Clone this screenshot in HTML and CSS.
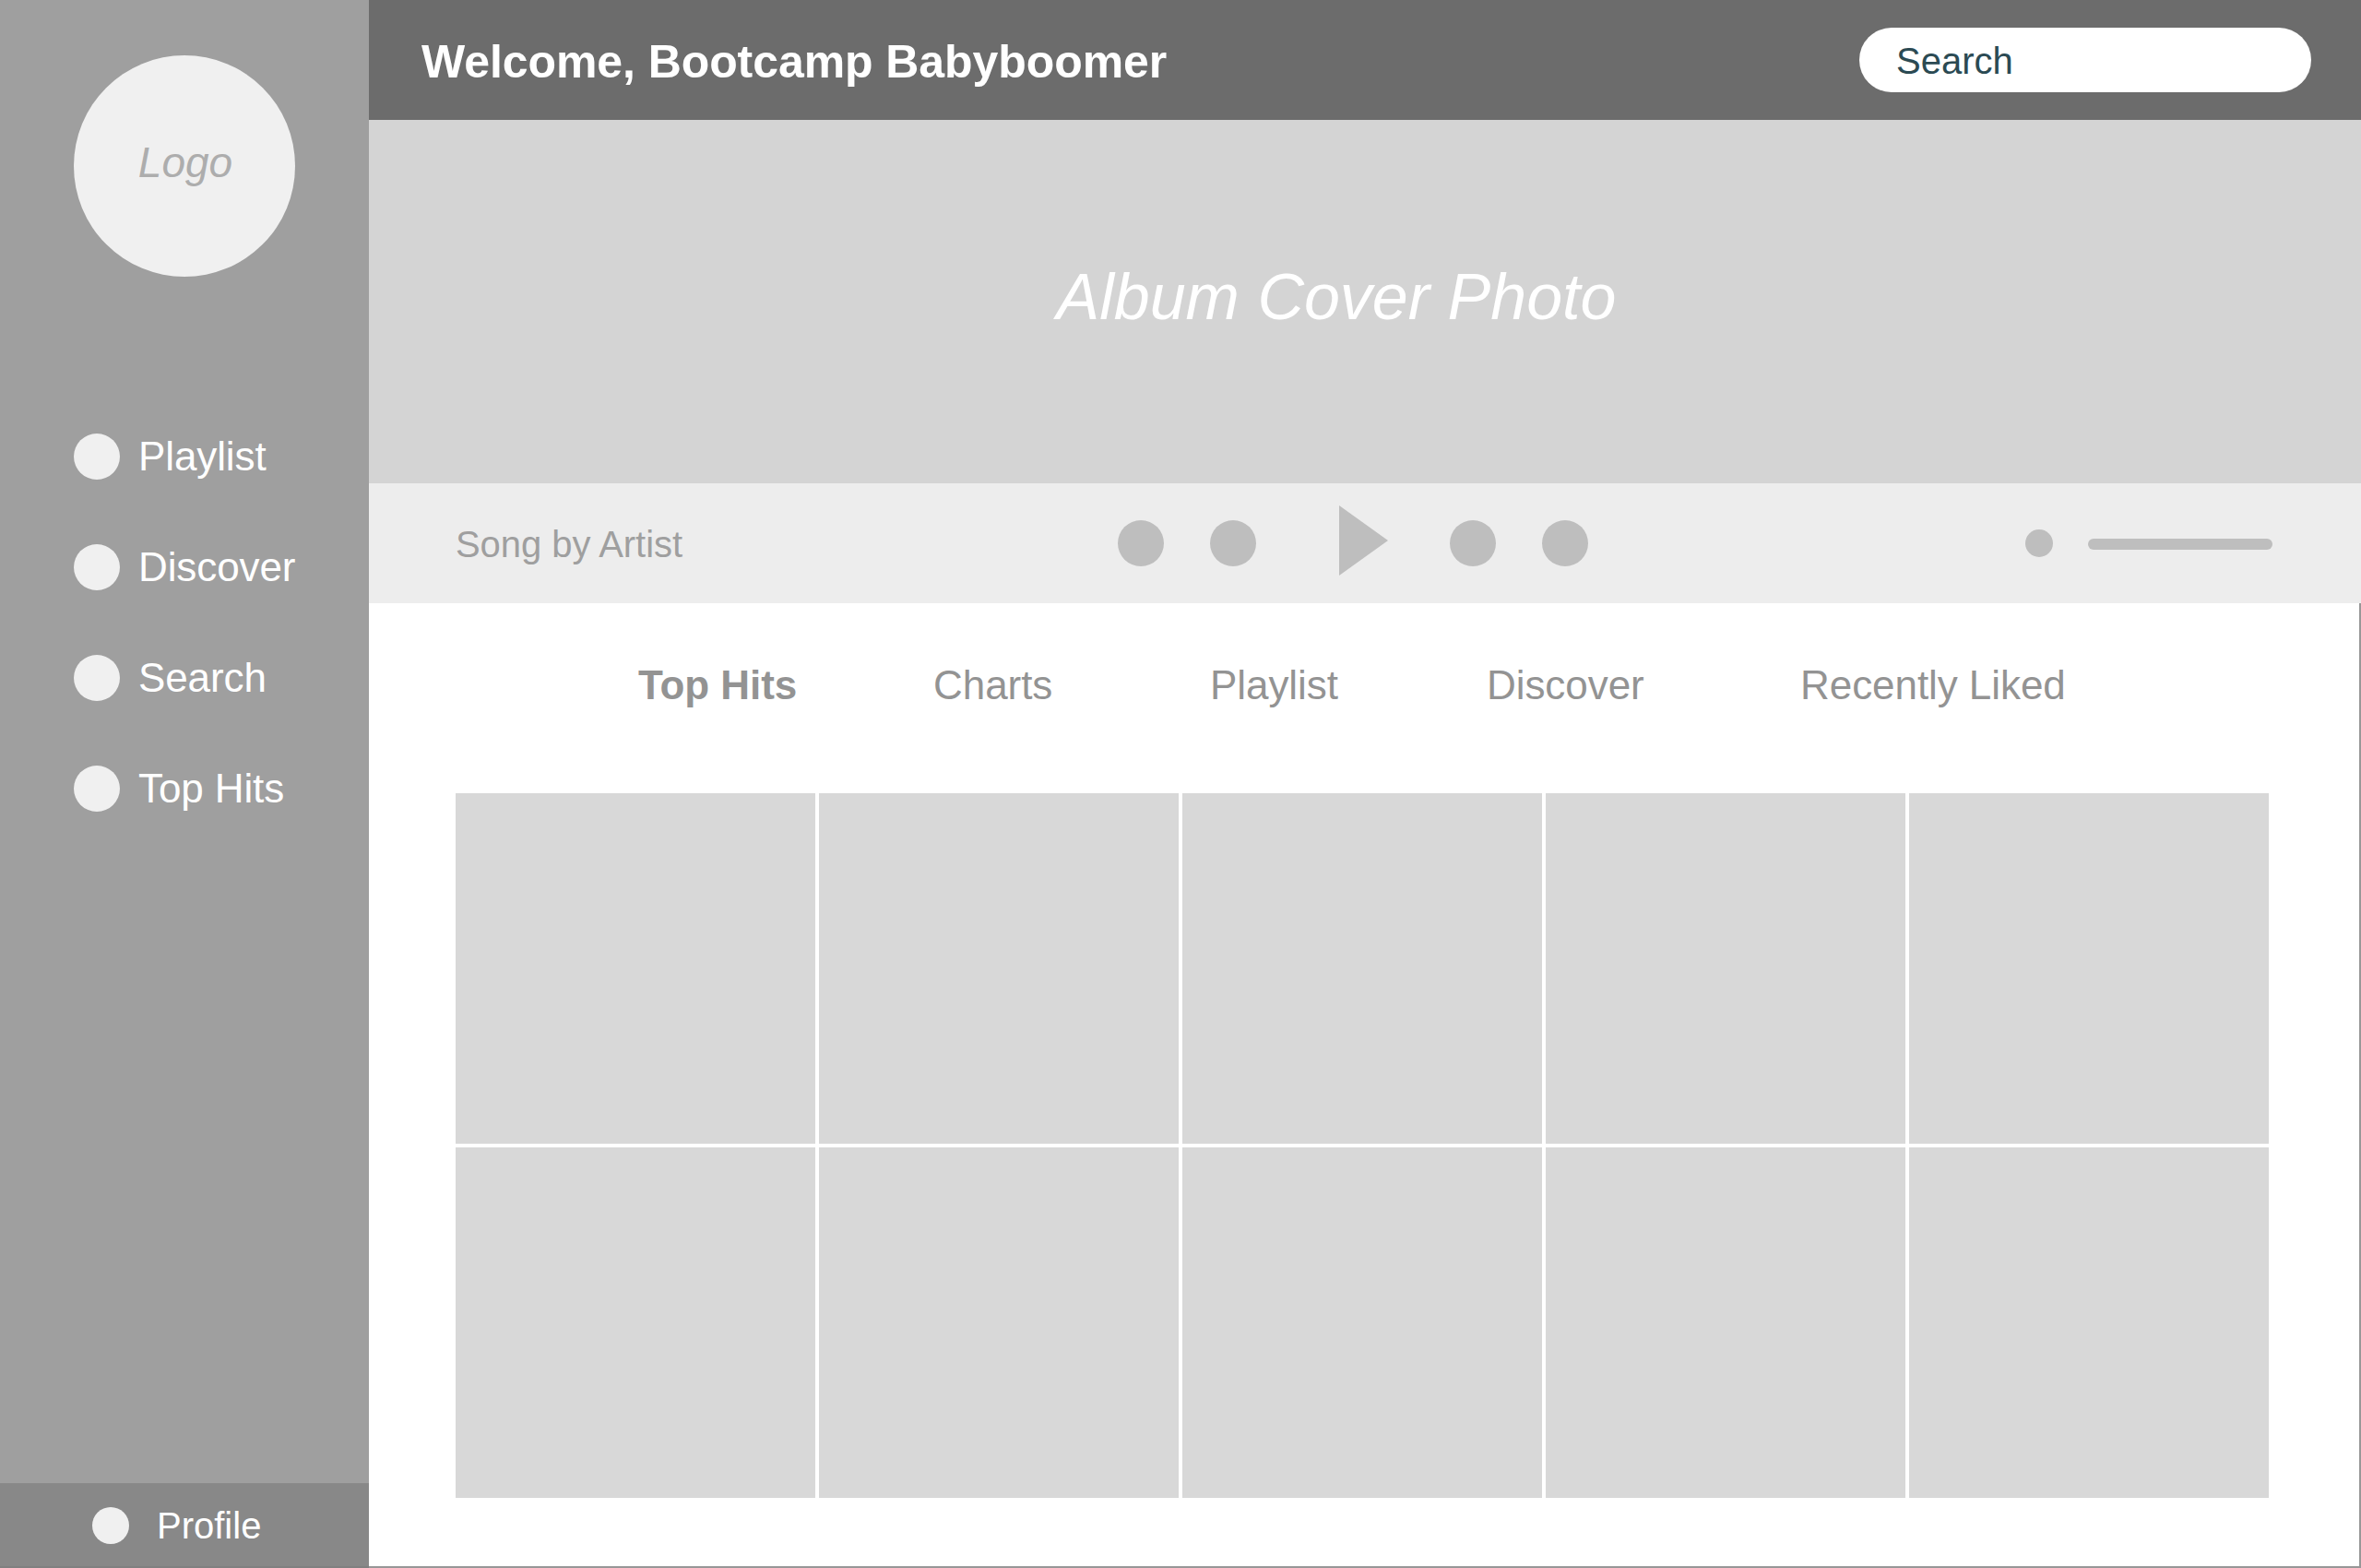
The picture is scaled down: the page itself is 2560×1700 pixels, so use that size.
FILE: index.html
```html
<!DOCTYPE html>
<html lang="en">
<head>
  <meta charset="utf-8">
  <title>Bootcamp Babyboomer</title>
  <link rel="stylesheet" href="styles.css">
</head>
<body>
  <div class="app">
    <aside class="sidebar">
      <div class="logo"><span>Logo</span></div>
      <nav class="menu">
        <a class="menu-item"><i class="dot"></i>Playlist</a>
        <a class="menu-item"><i class="dot"></i>Discover</a>
        <a class="menu-item"><i class="dot"></i>Search</a>
        <a class="menu-item"><i class="dot"></i>Top Hits</a>
      </nav>
      <a class="profile"><i class="dot dot-profile"></i>Profile</a>
    </aside>
    <main class="main">
      <header class="header">
        <h1 class="welcome">Welcome, Bootcamp Babyboomer</h1>
        <div class="search">Search</div>
      </header>
      <section class="cover">Album Cover Photo</section>
      <section class="player">
        <div class="song">Song by Artist</div>
        <div class="controls">
          <i class="control"></i>
          <i class="control"></i>
          <svg class="play" width="53" height="76" viewBox="0 0 53 76"><path d="M0 0 53 38 0 76Z"/></svg>
          <i class="control"></i>
          <i class="control"></i>
        </div>
        <div class="volume">
          <i class="speaker"></i>
          <i class="level"></i>
        </div>
      </section>
      <section class="content">
        <nav class="tabs">
          <a class="tab active">Top Hits</a>
          <a class="tab">Charts</a>
          <a class="tab">Playlist</a>
          <a class="tab">Discover</a>
          <a class="tab">Recently Liked</a>
        </nav>
        <div class="tiles">
          <div class="tile"></div><div class="tile"></div><div class="tile"></div><div class="tile"></div><div class="tile"></div>
          <div class="tile"></div><div class="tile"></div><div class="tile"></div><div class="tile"></div><div class="tile"></div>
        </div>
      </section>
    </main>
  </div>
</body>
</html>
```
FILE: styles.css
```css
* { box-sizing: border-box; }

body {
  margin: 0;
  font-family: "Liberation Sans", Helvetica, Arial, sans-serif;
  background: #fff;
}

.app {
  display: flex;
  width: 2560px;
  height: 1700px;
  overflow: hidden;
}

/* Sidebar */
.sidebar {
  display: flex;
  flex-direction: column;
  width: 400px;
  background: #9f9f9f;
  color: #fff;
}

.logo {
  display: flex;
  align-items: center;
  justify-content: center;
  width: 240px;
  height: 240px;
  margin: 60px 80px 0;
  padding: 0 0 8px 2px;
  border-radius: 50%;
  background: #f0f0f0;
  color: #adadad;
  font-size: 46px;
  font-style: italic;
}

.menu {
  display: flex;
  flex-direction: column;
  gap: 70px;
  margin: 170px 0 0 80px;
}

.menu-item {
  display: flex;
  align-items: center;
  gap: 20px;
  height: 50px;
  font-size: 44px;
  letter-spacing: -0.1px;
  white-space: nowrap;
}

.dot {
  flex: none;
  width: 50px;
  height: 50px;
  border-radius: 50%;
  background: #f0f0f0;
}

.profile {
  display: flex;
  align-items: center;
  gap: 30px;
  height: 92px;
  margin-top: auto;
  padding: 2px 0 0 100px;
  border-bottom: 2px solid #808080;
  background: #888;
  font-size: 40px;
}

.dot-profile {
  width: 40px;
  height: 40px;
}

/* Main column */
.main {
  display: flex;
  flex-direction: column;
  width: 2160px;
}

.header {
  display: flex;
  align-items: center;
  justify-content: space-between;
  height: 130px;
  padding: 0 54px 0 57px;
  background: #6c6c6c;
}

.welcome {
  margin: 0;
  padding-top: 4px;
  color: #fff;
  font-size: 50px;
  font-weight: 700;
  letter-spacing: -0.08px;
}

.search {
  width: 490px;
  height: 70px;
  padding: 2px 40px 0;
  border-radius: 35px;
  background: #fff;
  color: #2b4a53;
  font-size: 40px;
  line-height: 68px;
}

.cover {
  display: flex;
  align-items: center;
  justify-content: center;
  height: 394px;
  padding: 0 62px 10px 0;
  background: #d4d4d4;
  color: #fff;
  font-size: 70px;
  font-style: italic;
}

.player {
  display: grid;
  grid-template-columns: 718px 984px 1fr;
  align-items: center;
  height: 130px;
  padding-left: 94px;
  background: #ededed;
}

.song {
  padding-top: 2px;
  color: #9f9f9f;
  font-size: 40px;
  letter-spacing: -0.06px;
}

.controls {
  display: flex;
  align-items: center;
  gap: 50px;
}

.control {
  width: 50px;
  height: 50px;
  border-radius: 50%;
  background: #bebebe;
}

.play {
  margin: 0 17px 6px 40px;
  fill: #bebebe;
}

.volume {
  display: flex;
  align-items: center;
  gap: 38px;
}

.speaker {
  width: 30px;
  height: 30px;
  border-radius: 50%;
  background: #bebebe;
}

.level {
  width: 200px;
  height: 12px;
  margin-top: 2px;
  border-radius: 6px;
  background: #bebebe;
}

.content {
  flex: 1;
  padding: 64px 0 0 94px;
  border: solid #979797;
  border-width: 0 2px 2px 0;
}

.tabs {
  display: grid;
  grid-template-columns: 320px 300px 300px 340px auto;
  margin-left: 198px;
  color: #939393;
  font-size: 44px;
  line-height: 50px;
  letter-spacing: -0.06px;
  white-space: nowrap;
}

.active { font-weight: 700; }

.tiles {
  display: grid;
  grid-template-columns: repeat(5, 390px);
  grid-auto-rows: 380px;
  gap: 4px;
  margin-top: 92px;
}

.tile { background: #d8d8d8; }
```
